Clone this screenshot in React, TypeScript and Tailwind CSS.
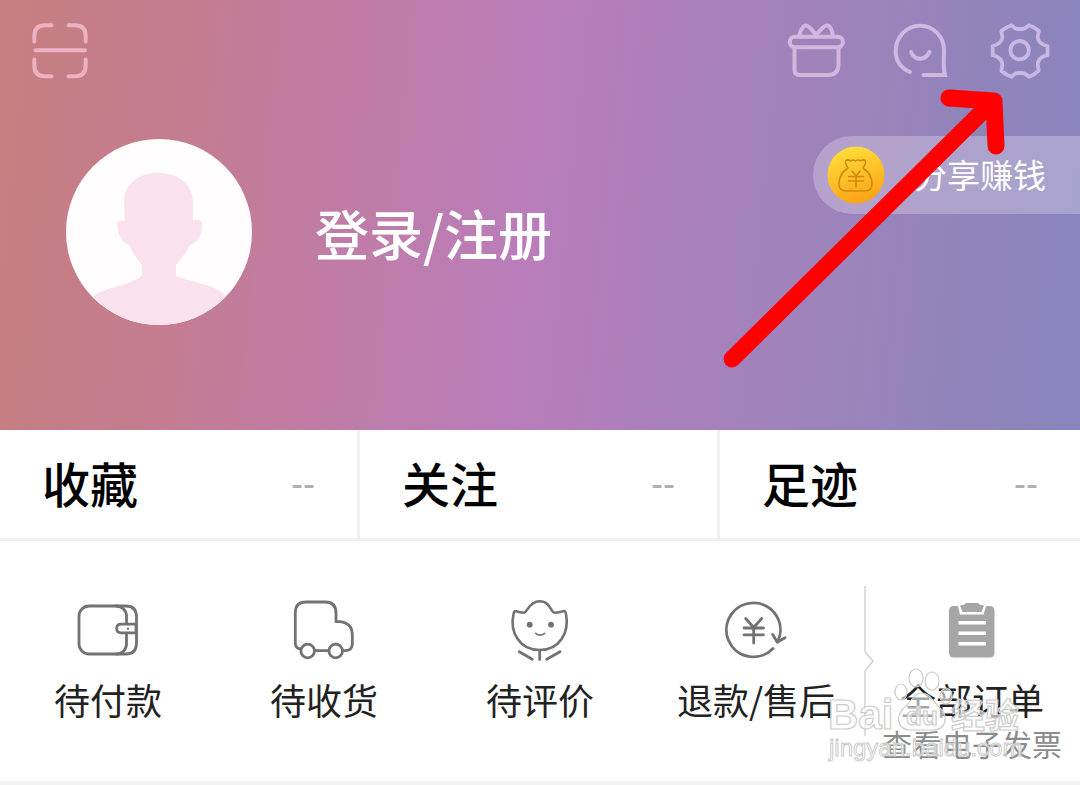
import type { ReactNode } from "react";

const stats = [
  { label: "收藏", value: "--" },
  { label: "关注", value: "--" },
  { label: "足迹", value: "--" },
];

function ScanIcon() {
  return (
    <svg viewBox="0 0 60 60" className="size-[60px]" fill="none" stroke="#ecb2c1" strokeWidth="4" strokeLinecap="round" strokeLinejoin="round">
      <path d="M4.3 21.5V16Q4.3 5.3 15 5.3H21.5M38.5 5.3H45Q55.7 5.3 55.7 16V21.5M4.3 39.5V45Q4.3 56.3 15 56.3H21.5M38.5 56.3H45Q55.7 56.3 55.7 45V39.5M5.5 30.2H55" />
    </svg>
  );
}

function GiftIcon() {
  return (
    <svg viewBox="0 0 60 60" className="size-[60px]" fill="none" stroke="#d4b6df" strokeWidth="4" strokeLinecap="round" strokeLinejoin="round">
      <rect x="3.8" y="16.8" width="53" height="10.4" rx="5" />
      <path d="M8.5 28V50Q8.5 55 13.5 55H42Q52.5 55 52.5 44V28" />
      <path d="M13.5 15.5C14 11 17 5.5 20 5.5C23 5.5 26 10 30.2 15C34 10 38 5.5 41 5.5C44.5 5.5 46.5 11 46.8 15.5" />
    </svg>
  );
}

function ChatIcon() {
  return (
    <svg viewBox="0 0 60 60" className="size-[60px]" fill="none" stroke="#cfb8e1" strokeWidth="4" strokeLinecap="round">
      <path d="M22 52C13 48 7.7 40.5 7.7 31.2C7.7 17 18.5 5.8 32 5.8C45.5 5.8 56 16.5 56 30C56 40 54.8 46 57 55H35.5" />
      <path d="M23 32C27 41 37 41 41.5 32" />
    </svg>
  );
}

function GearIcon() {
  return (
    <svg viewBox="0 0 60 60" className="size-[60px]" fill="none" stroke="#c9b8e3" strokeWidth="3.8" strokeLinejoin="round">
      <path d="M21.5 5.2C24 7 24.5 9 27.5 9H32.5C35.5 9 36.5 7 39 5.2Q44.5 7 48.8 11C48.5 14 47 16.500 48.3 19.5C49.8 23 52 25 57.5 26V35.2C53 36 50 38 48.3 41.5C46.8 44.5 48.5 47 48.7 50.5Q44.5 55 39 56.8C36.5 55 35.5 53 32.5 53H27.5C24.5 53 24 55 21.5 56.8Q16 55 11.5 51C11.5 47 13.2 44.5 11.8 41.5C10 38 8 36.5 2.7 35.2V26C8 25 10 23 11.8 19.5C13.2 16.5 11.5 14 11.3 11Q16 7 21.5 5.2Z" />
      <circle cx="29.6" cy="30.2" r="9.2" />
    </svg>
  );
}

function Avatar() {
  return (
    <svg viewBox="0 0 186 186" className="size-[186px] shrink-0 rounded-full bg-[#fffdfe]" fill="#f9e2ee">
      <path d="M92 34C112 34 125 44 127 60L127 81Q136 79 136 87C135 96 133 103 124 106C121 112 116 119 110 126V137C124 143 148 145 159 156L190 190H-4L29 156C40 148 68 146 76 136V126C70 119 66 112 63 106C54 102 52 95 51 83Q54 80 59 82L58 60C60 44 73 34 92 34Z" />
    </svg>
  );
}

function CoinIcon() {
  return (
    <svg viewBox="0 0 58 58" className="size-[58px]" fill="none" stroke="#cf8a0c" strokeWidth="1.6" strokeLinecap="round" strokeLinejoin="round">
      <defs>
        <linearGradient id="coin" x1="0.3" y1="0" x2="0.6" y2="1">
          <stop offset="0" stopColor="#ffdf3c" />
          <stop offset="1" stopColor="#fca214" />
        </linearGradient>
      </defs>
      <circle cx="29" cy="29" r="28.5" fill="url(#coin)" stroke="none" />
      <path d="M21 22C19 19 17.5 16 19 14.5Q21 13 23.5 15Q26 13 28.5 15Q31 13 33.5 15Q36 13 38 14.5C39.5 16 38 19 36 22C42 26 45 32 45 38Q45 45 38 45H19Q12 45 12 38C12 32 15 26 21 22Z" />
      <path d="M25 25L29 30L33 25M21.5 30.5H36.5M21.5 35H36.5M29 30V41" />
    </svg>
  );
}

function WalletIcon() {
  return (
    <svg viewBox="0 0 64 64" className="size-16" fill="none" stroke="#727272" strokeWidth="2.8" strokeLinecap="round" strokeLinejoin="round">
      <rect x="3" y="9" width="47.5" height="48" rx="10" />
      <path d="M40 9H50Q60.5 9 60.5 20V46Q60.5 57 50 57H40" />
      <path d="M60 27.2H45Q40.7 27.2 40.7 31.5T45 35.8H60Z" fill="#fff" />
      <circle cx="52" cy="31.6" r="1.2" fill="#727272" stroke="none" />
    </svg>
  );
}

function TruckIcon() {
  return (
    <svg viewBox="0 0 64 64" className="size-16" fill="none" stroke="#727272" strokeWidth="2.8" strokeLinejoin="round">
      <path d="M8.7 52Q3.3 51.5 3.3 46V16Q3.3 5 14 5H33Q44 5 44 16V24.7H48Q60.3 26 60.3 38V47Q60.3 53.5 53 53.7H51M22.5 53.7H37" />
      <circle cx="15.7" cy="54" r="6.8" />
      <circle cx="43.7" cy="54" r="6.8" />
    </svg>
  );
}

function FlowerIcon() {
  return (
    <svg viewBox="0 0 64 64" className="size-16" fill="none" stroke="#727272" strokeWidth="2.6" strokeLinecap="round" strokeLinejoin="round">
      <path d="M7.5 14Q12 15.5 16 15.8C19 15.8 21 4.3 31.7 4.3S43 15.8 46.5 15.8Q51 15.5 56 14Q57.5 14 58 17C61.5 35 52 53 31.7 53S1.5 35 5.5 17Q6 14 7.5 14Z" />
      <path d="M27.7 36.3Q32 40 36.7 36.3" strokeWidth="1.6" />
      <path d="M31.7 54V62.5M11.3 54.8L24.3 62.3M52 54.8L38.7 62.3" strokeWidth="2.8" />
      <g fill="#727272" stroke="none">
        <circle cx="21.7" cy="27.7" r="2.9" />
        <circle cx="43" cy="27.7" r="2.9" />
      </g>
    </svg>
  );
}

function RefundIcon() {
  return (
    <svg viewBox="0 0 64 64" className="size-16" fill="none" stroke="#727272" strokeWidth="2.8" strokeLinecap="round" strokeLinejoin="round">
      <path d="M49 51.5A27 27 0 1 1 53.8 44.5" />
      <path d="M48.7 37.5L53.3 45.2L61 40.7" />
      <path d="M21.7 21.5L29.7 30.5L37.7 21.5M20 31H39.5M20 37.8H39.5M29.7 31V46" />
    </svg>
  );
}

function ClipboardIcon() {
  return (
    <svg viewBox="0 0 64 64" className="size-16" fill="#a6a6a6">
      <rect x="9" y="9" width="45.5" height="51.5" rx="4.5" />
      <path d="M17 5L20 17.5H43.5L47.5 5Z" fill="#fff" />
      <path d="M20 8.5L24 7.8L26 6H38L40 7.8L44 8.5L41.5 15H22.5Z" />
      <path d="M18.5 25.7H46M18.5 36.3H46M18.5 46.7H46" stroke="#fff" strokeWidth="3.4" />
    </svg>
  );
}

function OrderEntry({ icon, label, note }: { icon: ReactNode; label: string; note?: string }) {
  return (
    <a href="#" className="flex flex-col items-center whitespace-nowrap">
      {icon}
      <span className="mt-5 text-[36px] leading-9 text-[#222]">{label}</span>
      {note && <span className="mt-2 text-[30px] leading-9 text-[#8c8c8c]">{note}</span>}
    </a>
  );
}

function Watermark() {
  return (
    <svg viewBox="0 0 220 104" className="pointer-events-none absolute top-[124px] right-10 h-[104px] w-[220px]" fill="#ffffff99" stroke="#cccccc" strokeWidth="1.2">
      <ellipse cx="81" cy="27" rx="6" ry="8" />
      <ellipse cx="96" cy="13" rx="7" ry="9" />
      <ellipse cx="112" cy="16" rx="7" ry="9" />
      <ellipse cx="126" cy="31" rx="6" ry="8" />
      <path d="M102 28C110 28 113 37 120 43C129 51 126 65 113 65H91C77 65 75 51 84 43C91 37 94 28 102 28Z" />
      <g fontFamily="Liberation Sans, Noto Sans CJK SC, sans-serif">
        <text x="8" y="64" fontSize="42" fontWeight="700">Bai</text>
        <text x="86" y="60" fontSize="26" fontWeight="700">du</text>
        <text x="131" y="63" fontSize="34" fontWeight="700">经验</text>
        <text x="9" y="91" fontSize="24" strokeWidth="1">jingyan.baidu.com</text>
      </g>
    </svg>
  );
}

export default function App() {
  return (
    <main lang="zh-CN" className="relative min-h-screen overflow-hidden bg-[#f2f2f2] font-['Noto_Sans_CJK_SC',sans-serif]">
      {/* Profile header */}
      <header className="bg-[linear-gradient(96deg,#c77f80_0%,#c47d8d_15%,#c17ca3_30%,#b97dba_49%,#a382bb_70%,#9184bb_88%,#8a84be_100%)] pt-5 pb-[102px]">
        <div className="flex items-center justify-between px-[30px]">
          <button type="button" aria-label="扫一扫">
            <ScanIcon />
          </button>
          <div className="flex gap-[42px]">
            <button type="button" aria-label="礼物">
              <GiftIcon />
            </button>
            <button type="button" aria-label="消息">
              <ChatIcon />
            </button>
            <button type="button" aria-label="设置">
              <GearIcon />
            </button>
          </div>
        </div>

        <div className="flex items-start justify-between pt-14">
          <a href="#" className="flex items-center gap-[63px] py-[3px] pl-[66px]">
            <Avatar />
            <span className="text-[54px] font-medium text-white">登录/注册</span>
          </a>
          <button type="button" className="flex h-[78px] items-center gap-[29px] rounded-l-full bg-white/25 pr-[34px] pl-[14px]">
            <CoinIcon />
            <span className="text-[33px] text-white">分享赚钱</span>
          </button>
        </div>
      </header>

      {/* Counters */}
      <section className="grid grid-cols-3 divide-x-3 divide-[#f0f0f0] border-b-3 border-[#f0f0f0] bg-white">
        {stats.map((item) => (
          <a key={item.label} href="#" className="flex items-center justify-between px-[42px] pt-7 pb-8">
            <span className="text-[48px] leading-[48px] font-medium text-black">{item.label}</span>
            <span className="pt-1 font-['Liberation_Sans',sans-serif] text-[36px] leading-[44px] text-[#b0b0b0]">{item.value}</span>
          </a>
        ))}
      </section>

      {/* Orders */}
      <section className="relative grid grid-cols-5 bg-white pt-14 pb-5">
        <OrderEntry icon={<WalletIcon />} label="待付款" />
        <OrderEntry icon={<TruckIcon />} label="待收货" />
        <OrderEntry icon={<FlowerIcon />} label="待评价" />
        <OrderEntry icon={<RefundIcon />} label="退款/售后" />
        <OrderEntry icon={<ClipboardIcon />} label="全部订单" note="查看电子发票" />
        <svg viewBox="0 0 10 150" className="absolute top-[45px] left-4/5 h-[150px] w-[10px]" fill="none" stroke="#cccccc" strokeWidth="1.3">
          <path d="M1 0V66L9 75L1 85V150" />
        </svg>
        <Watermark />
      </section>

      {/* Pointer to the settings button */}
      <svg viewBox="0 0 300 300" className="pointer-events-none absolute top-20 right-[60px] size-[300px]" fill="none" stroke="#ff0000" strokeWidth="17" strokeLinecap="round" strokeLinejoin="round">
        <path d="M12 279L270 24" />
        <path d="M229 18L274 21L276 66" />
      </svg>
    </main>
  );
}
